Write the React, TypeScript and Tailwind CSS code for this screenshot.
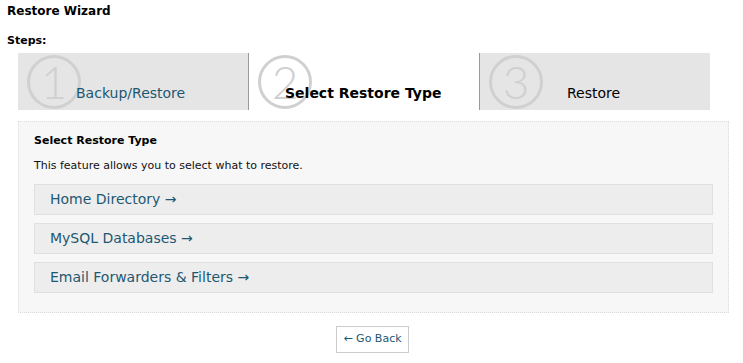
import React from "react";

function Circle({ n }: { n: string }) {
  return (
    <svg width="58" height="58" viewBox="0 0 58 58" className="absolute left-[7px] top-[0px]">
      <circle cx="29" cy="29" r="25.5" fill="none" stroke="#d0d0d0" strokeWidth="3" />
      <text
        x="29"
        y="46"
        textAnchor="middle"
        fontSize="46"
        fill="#d0d0d0"
        fontFamily="'Lato', 'Roboto', sans-serif"
        style={{ fontWeight: 300 }}
      >
        {n}
      </text>
    </svg>
  );
}

function Tab({
  n,
  label,
  active,
  last,
  labelClass,
}: {
  n: string;
  label: string;
  active?: boolean;
  last?: boolean;
  labelClass: string;
}) {
  return (
    <div
      className={
        "relative flex-1 flex items-end pb-[6px] " +
        (active ? "bg-white " : "bg-[#e5e5e5] ") +
        (last ? "" : "border-r border-[#999]")
      }
    >
      <Circle n={n} />
      <div className={"relative " + labelClass}>{label}</div>
    </div>
  );
}

export default function App() {
  const f = { fontFamily: "'DejaVu Sans', Verdana, sans-serif" };
  const rows = ["Home Directory \u2192", "MySQL Databases \u2192", "Email Forwarders & Filters \u2192"];
  return (
    <div className="w-[743px] h-[363px] bg-white text-black overflow-hidden flex flex-col" style={f}>
      <div className="pl-[7px] pt-[3px] text-[12px] font-bold leading-[16px]">Restore Wizard</div>
      <div className="pl-[7px] pt-[15px] text-[11px] font-bold leading-[14px]">Steps:</div>
      <div className="ml-[18px] mt-[5px] flex w-[692px] h-[57px]">
        <Tab n="1" label="Backup/Restore" labelClass="pl-[58px] text-[14px] text-[#1d5872]" />
        <Tab n="2" label="Select Restore Type" active labelClass="pl-[36px] text-[14px] font-bold text-black" />
        <Tab n="3" label="Restore" last labelClass="pl-[87px] text-[14px] text-black" />
      </div>
      <div className="ml-[18px] mt-[11px] w-[711px] h-[192px] bg-[#f7f7f7] border border-dotted border-[#dcdcdc] px-[15px] pt-[12px]">
        <div className="text-[11px] font-bold leading-[14px]">Select Restore Type</div>
        <div className="mt-[11px] text-[11px] leading-[14px] text-[#111]">This feature allows you to select what to restore.</div>
        <div className="mt-[11px] flex flex-col gap-[8px]">
          {rows.map((r) => (
            <div
              key={r}
              className="h-[31px] bg-[#ededed] border border-[#e0e0e0] flex items-center pl-[15px] text-[14px] text-[#1d5872]"
            >
              {r}
            </div>
          ))}
        </div>
      </div>
      <div className="flex justify-center mt-[13px]">
        <div className="ml-[2px] h-[27px] px-[6px] border border-[#cccccc] bg-white flex items-center text-[11px] text-[#1d5872]">
          {"\u2190 Go Back"}
        </div>
      </div>
    </div>
  );
}
